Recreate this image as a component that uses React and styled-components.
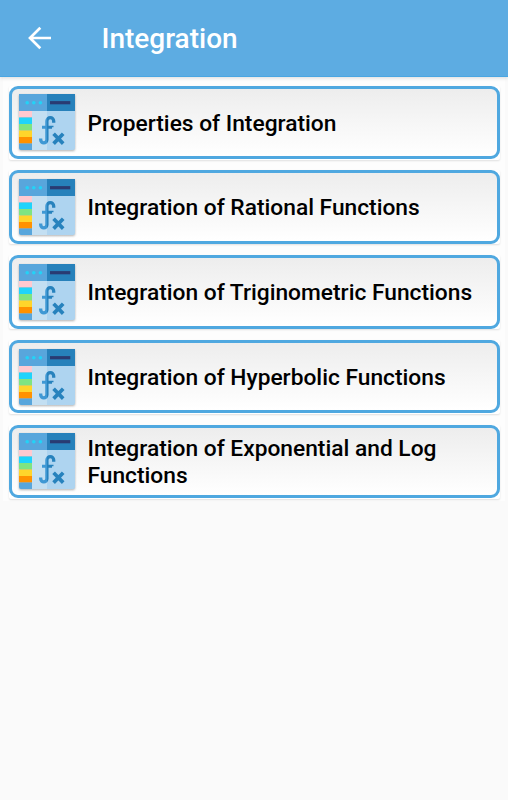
import React from 'react';
import styled, { createGlobalStyle } from 'styled-components';

const GlobalStyle = createGlobalStyle`
  * {
    box-sizing: border-box;
  }

  body {
    margin: 0;
    background: #fafafa;
    font-family: Roboto, "Liberation Sans", sans-serif;
  }
`;

const Screen = styled.div`
  min-height: 800px;
  display: flex;
  flex-direction: column;
`;

const Header = styled.header`
  height: 77px;
  display: flex;
  align-items: center;
  padding-left: 26px;
  background: #5dace2;
  border-bottom: 1px solid #4aa6e2;
  box-shadow: 0 1px 4px rgba(0, 0, 0, 0.14);
  position: relative;

  h1 {
    margin: 0 0 0 48.5px;
    padding-top: 2px;
    color: #fff;
    font-size: 28px;
    font-weight: 500;
    line-height: 34px;
  }
`;

const BackButton = styled.button`
  width: 27px;
  height: 27px;
  display: flex;
  padding: 0;
  border: 0;
  background: none;
`;

const TopicList = styled.main`
  display: flex;
  flex-direction: column;
  gap: 10.75px;
  margin: 0 3px;
  padding: 8.5px 5px 2px 5.5px;
  background: #fdfdfd;
`;

const Card = styled.div`
  height: 74px;
  background: #fff;
  border-radius: 2px;
  box-shadow: 0 1px 2px rgba(0, 0, 0, 0.12);
`;

const Topic = styled.button`
  width: 100%;
  height: 73.5px;
  display: flex;
  align-items: center;
  gap: 13px;
  padding: 0 8px 0 7px;
  border: 3px solid #4fa8e0;
  border-radius: 9px;
  background: linear-gradient(#ededed, #fff);
  color: #000;
  font-family: inherit;
  font-size: 22.75px;
  font-weight: 500;
  line-height: 27px;
  text-align: left;

  span {
    padding-top: 1.5px;
  }
`;

const TopicIcon = styled.svg`
  flex: none;
  filter: drop-shadow(0 1px 1px rgba(0, 0, 0, 0.3));
`;

const topics = [
	'Properties of Integration',
	'Integration of Rational Functions',
	'Integration of Triginometric Functions',
	'Integration of Hyperbolic Functions',
	'Integration of Exponential and Log Functions',
];

const FunctionIcon = () => (
	<TopicIcon width="56" height="56" viewBox="0 0 56 56" fill="none">
		<defs>
			<linearGradient id="ink" gradientUnits="userSpaceOnUse" x1="0" y1="0" x2="56" y2="0">
				<stop offset="0.5" stopColor="#3f98d4" />
				<stop offset="0.5" stopColor="#2782bd" />
			</linearGradient>
		</defs>
		<path d="M13 17h15v39H13z" fill="#c3dff2" />
		<path d="M28 17h28v37a2 2 0 0 1-2 2H28z" fill="#aed4f0" />
		<path d="M0 0h28v17H0z" fill="#58a6dc" />
		<path d="M28 0h28v17H28z" fill="#2781bb" />
		<path d="M0 17h13v6.5H0z" fill="#ffc9d0" />
		<path d="M0 23.5h13V30H0z" fill="#1fd3fb" />
		<path d="M0 30h13v6.5H0z" fill="#7fe481" />
		<path d="M0 36.5h13V43H0z" fill="#ffd52b" />
		<path d="M0 43h13v6.5H0z" fill="#ff9100" />
		<path d="M0 49.5h13V56H2a2 2 0 0 1-2-2z" fill="#58a6dc" />
		<g fill="#22d3f7">
			<circle cx="8.2" cy="8.7" r="1.8" />
			<circle cx="14.8" cy="8.7" r="1.8" />
			<circle cx="21.4" cy="8.7" r="1.8" />
		</g>
		<path d="M31 8.7h20.3" stroke="#293b73" strokeWidth="3.2" />
		<g stroke="url(#ink)" strokeWidth="3.3">
			<path d="M34.7 28.7v-1.6a3.4 3.4 0 0 0-6.8 0v18.7a3.1 3.1 0 0 1-6.2 0v-1.2" />
			<path d="M23 33.2h10v.01" strokeWidth="3" />
			<path d="M34.6 39.8l9.6 9.8M44.2 39.8l-9.6 9.8" strokeWidth="3.7" />
		</g>
	</TopicIcon>
);

const App = () => {
	return (
		<Screen>
			<GlobalStyle />
			<Header>
				<BackButton aria-label="Back">
					<svg width="27" height="27" viewBox="0 0 27 27" fill="none" stroke="#fff" strokeWidth="2.7">
						<path d="M25 13H4M14.3 2.7L4 13l10.3 10.3" />
					</svg>
				</BackButton>
				<h1>Integration</h1>
			</Header>
			<TopicList>
				{topics.map((topic) => (
					<Card key={topic}>
						<Topic>
							<FunctionIcon />
							<span>{topic}</span>
						</Topic>
					</Card>
				))}
			</TopicList>
		</Screen>
	);
};

export default App;
